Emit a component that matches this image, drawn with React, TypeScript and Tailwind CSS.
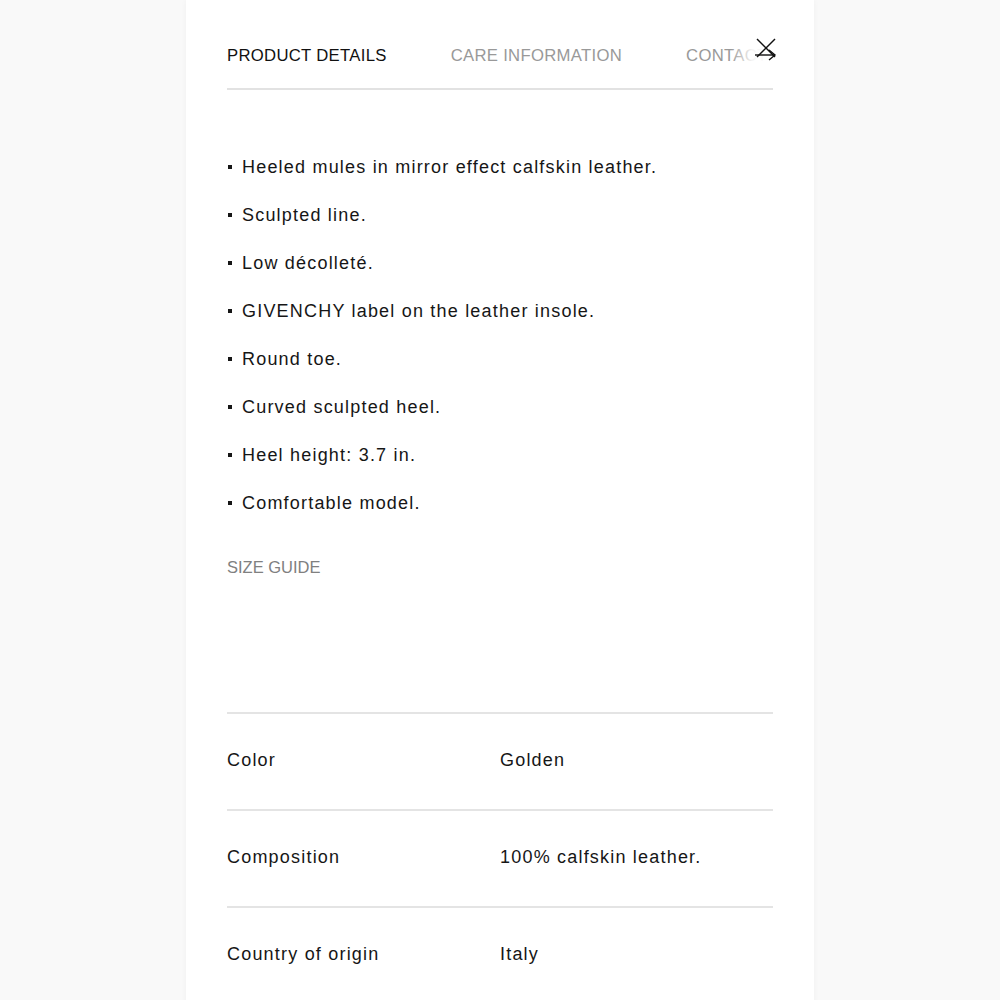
import { useState } from "react";

const FONT = { fontFamily: "'Liberation Sans', Arial, sans-serif" };

const details = [
  "Heeled mules in mirror effect calfskin leather.",
  "Sculpted line.",
  "Low décolleté.",
  "GIVENCHY label on the leather insole.",
  "Round toe.",
  "Curved sculpted heel.",
  "Heel height: 3.7 in.",
  "Comfortable model.",
];

const specs = [
  { label: "Color", value: "Golden" },
  { label: "Composition", value: "100% calfskin leather." },
  { label: "Country of origin", value: "Italy" },
];

const tabs = ["PRODUCT DETAILS", "CARE INFORMATION", "CONTACT"];

export default function App() {
  const [active, setActive] = useState(0);

  return (
    <div
      className="min-h-screen w-full bg-[#f9f9f9] flex justify-center"
      style={FONT}
    >
      <div className="relative w-[628px] min-h-screen bg-white px-[41px] shadow-[0_0_6px_rgba(0,0,0,0.04)]">
        {/* Tabs */}
        <div className="relative overflow-hidden border-b-2 border-[#e2e2e2]">
          <div className="flex gap-[64px] whitespace-nowrap">
            {tabs.map((tab, i) => (
              <button
                key={tab}
                onClick={() => setActive(i)}
                className={`relative pt-[44px] pb-[20px] text-[16.7px] leading-[24px] tracking-[0.3px] ${
                  i === active ? "text-[#111]" : "text-[#999]"
                }`}
              >
                {tab}
                {i === active && (
                  <span className="absolute left-0 right-0 -bottom-[2px] h-[2px] bg-[#111]" />
                )}
              </button>
            ))}
          </div>
          {/* fade on overflowing tab */}
          <div className="absolute right-0 top-0 h-[80px] w-[42px] bg-gradient-to-r from-white/0 via-white/90 to-white" />
        </div>

        {/* close */}
        <button className="absolute right-[36px] top-[36px]" aria-label="Close">
          <svg width="24" height="26" viewBox="0 0 24 26" fill="none" stroke="#111" strokeWidth="1.4">
            <path d="M3 3 L21 21" />
            <path d="M21 3 L3 21" />
            <path d="M1 19 H21" />
            <path d="M15 14 L21 19 L15 24" />
          </svg>
        </button>

        {/* Bullet list */}
        <ul className="mt-[65px] flex flex-col gap-[24px]">
          {details.map((d) => (
            <li key={d} className="flex items-center text-[18px] leading-[24px] tracking-[1.2px] text-[#161616]">
              <span className="mr-[10px] ml-[1px] h-[4px] w-[4px] bg-[#161616]" />
              {d}
            </li>
          ))}
        </ul>

        <div className="mt-[40px] text-[16.5px] leading-[24px] text-[#808080]">
          SIZE GUIDE
        </div>

        {/* Specs table */}
        <div className="mt-[133px] border-t-2 border-[#e4e4e4]">
          {specs.map((s) => (
            <div
              key={s.label}
              className="flex h-[97px] items-center pb-[4px] border-b-2 border-[#e4e4e4] text-[18px] leading-[24px] tracking-[1.2px] text-[#161616]"
            >
              <span className="w-[273px]">{s.label}</span>
              <span>{s.value}</span>
            </div>
          ))}
        </div>
      </div>
    </div>
  );
}
